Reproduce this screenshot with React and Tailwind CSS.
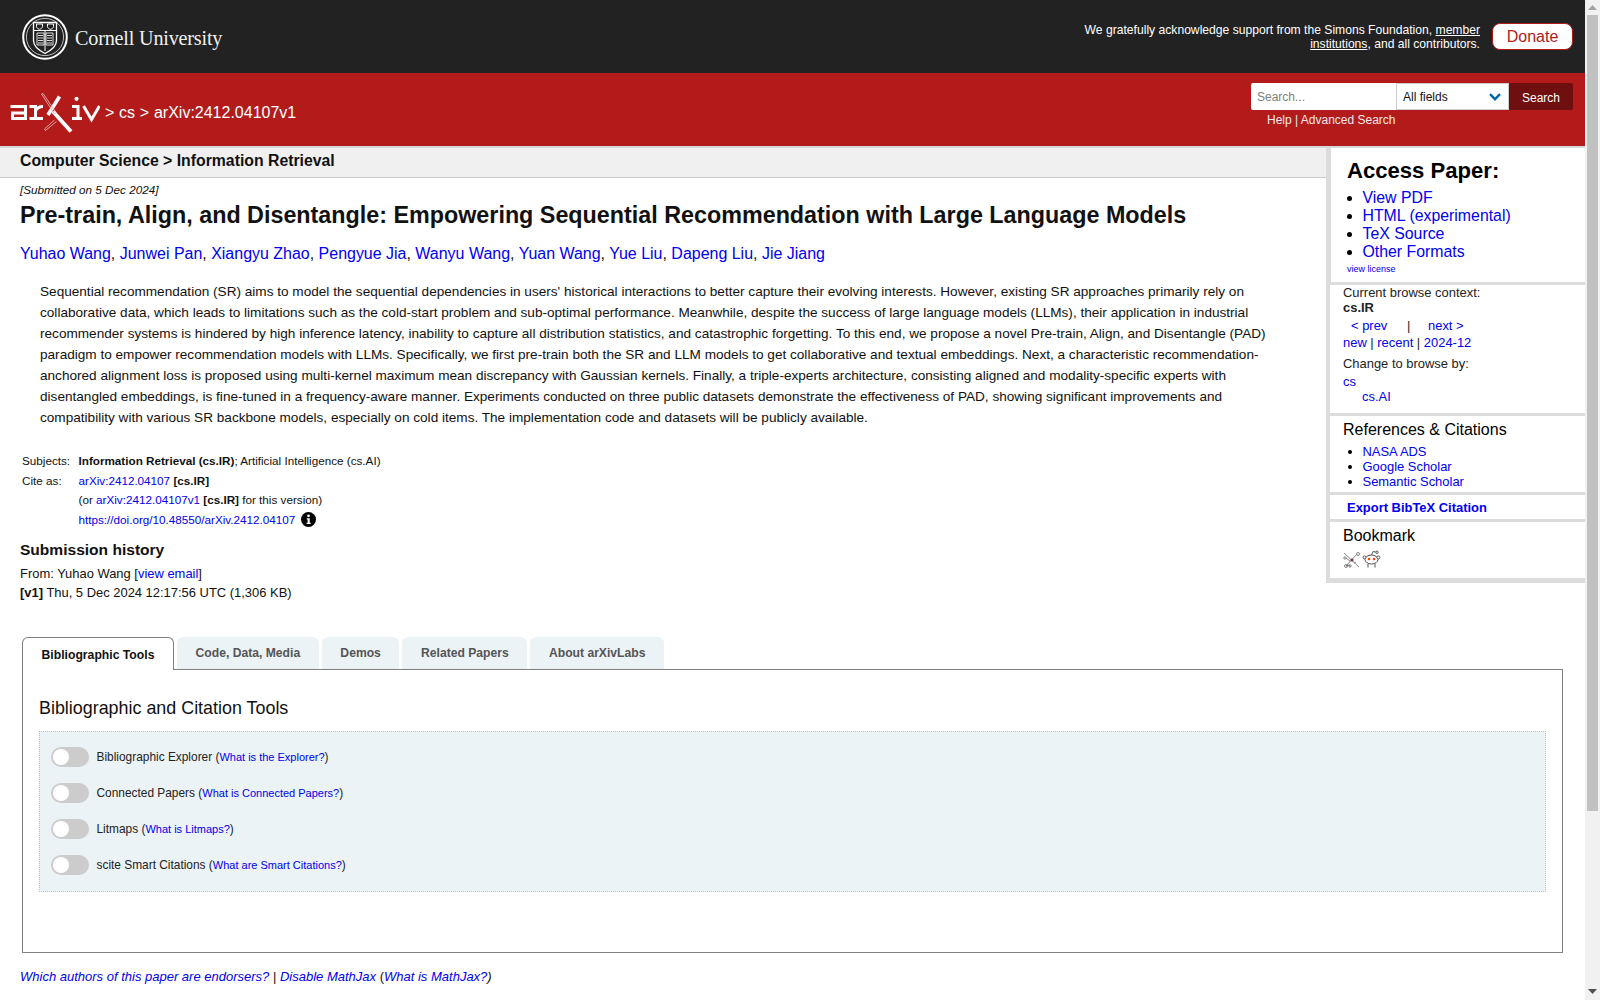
const A = ({ children, className = "" }) => <a className={"text-[#0000ee] " + className}>{children}</a>;

function Seal() {
  return (
    <svg width="46" height="46" viewBox="0 0 46 46" fill="none" stroke="#fff">
      <circle cx="23" cy="23" r="21.8" strokeWidth="2" />
      <circle cx="23" cy="23" r="18.6" strokeWidth="0.7" />
      <path d="M11.5 8.5h23v18c0 6.5-5.5 10-11.5 13-6-3-11.5-6.5-11.5-13z" strokeWidth="1.3" />
      <path d="M11.5 16.5h23" strokeWidth="1" />
      <path d="M14.5 10v2.5c0 1.6 2.2 2.8 3 2.8s3-1.2 3-2.8V10zM25.5 10v2.5c0 1.6 2.2 2.8 3 2.8s3-1.2 3-2.8V10z" strokeWidth="1" />
      <path d="M15 19h7v12h-7zM24 19h7v12h-7zM16 21.5h5M16 24h5M16 26.5h5M16 29h5M25 21.5h5M25 24h5M25 26.5h5M25 29h5" strokeWidth="0.85" />
      <path d="M23 17v20" strokeWidth="1" />
    </svg>
  );
}

function ArxivLogo() {
  return (
    <svg width="90" height="40" viewBox="0 0 90 40" fill="none" className="shrink-0">
      <g stroke="#fff" strokeWidth="3">
        <path d="M0.5 13.5H15.5V27M15.5 20H2.5V25.5H15.5" />
        <path d="M19.5 13.5H25.5V27M19.5 25.5H33M25.5 18c1.5-3 4-4.5 7.5-4.5" />
        <path d="M62 13.5H68V27M62 25.5H72" />
        <path d="M73.5 13 81.5 26.5 89.5 13" />
      </g>
      <circle cx="66.5" cy="5.8" r="2.1" fill="#fff" />
      <path d="M49.5 3.5 38 22" stroke="#fff" strokeWidth="3.6" />
      <path d="M43 18.5 61 38.5" stroke="#fff" strokeWidth="3.8" />
      <path d="M31.5 1 33 0.5 46 19.5 44.5 21zM44.5 27 34.5 36l1 1.5 11-9" stroke="#eab3b3" strokeWidth="0.9" />
    </svg>
  );
}

function Toggle() {
  return (
    <span className="flex h-5 w-[38px] shrink-0 items-center rounded-full bg-[#cccccc] pl-[2px]">
      <span className="h-[16px] w-[16px] rounded-full bg-white" />
    </span>
  );
}

function ToolRow({ name, link }) {
  return (
    <div className="flex h-[36px] items-center gap-[7.5px]">
      <Toggle />
      <span className="pt-[1px] text-[11.9px] text-[#222]">
        {name} (<A className="text-[11px]">{link}</A>)
      </span>
    </div>
  );
}

function Tab({ children, active }) {
  return active ? (
    <div className="z-10 -mb-px flex h-[33px] w-[152px] items-center justify-center rounded-t-[6px] border border-b-0 border-[#808080] bg-white pt-[1px] text-[12.2px] font-bold text-[#111]">
      {children}
    </div>
  ) : (
    <div className="flex h-[32px] items-center rounded-t-[6px] bg-[#ecf3f7] px-[18.6px] text-[12.15px] font-bold text-[#555]">
      {children}
    </div>
  );
}

function Scrollbar() {
  return (
    <div className="flex h-full w-[15px] shrink-0 flex-col bg-[#f1f1f1]">
      <div className="flex h-[15px] items-center justify-center">
        <svg width="9" height="5" viewBox="0 0 9 5"><path d="M4.5 0 9 5H0z" fill="#a3a3a3" /></svg>
      </div>
      <div className="mx-[2px] h-[796px] bg-[#c1c1c1]" />
      <div className="flex-1" />
      <div className="flex h-[17px] items-center justify-center">
        <svg width="9" height="5" viewBox="0 0 9 5"><path d="M0 0H9L4.5 5z" fill="#505050" /></svg>
      </div>
    </div>
  );
}

export default function App() {
  return (
    <div className="flex h-screen overflow-hidden bg-white font-['Liberation_Sans',Arial,sans-serif] text-[#111]">
      <div className="min-w-0 flex-1">
        <header className="flex h-[73px] items-center justify-between bg-[#222222] pl-[22px] pr-3">
          <div className="flex items-center gap-[7px]">
            <Seal />
            <span className="pt-[3px] font-['Liberation_Serif',serif] text-[20.2px] tracking-[-0.2px] text-[#f0f0f0]">Cornell University</span>
          </div>
          <div className="flex items-center gap-3">
            <p className="w-[420px] text-right text-[12.13px] leading-[14px] text-white">
              We gratefully acknowledge support from the Simons Foundation, <span className="underline">member institutions</span>, and all contributors.
            </p>
            <div className="flex h-[27px] w-[81px] items-center justify-center rounded-[8px] border border-[#b31b1b] bg-white text-[16px] text-[#b31b1b]">Donate</div>
          </div>
        </header>

        <div className="flex h-[73px] items-start justify-between bg-[#b31b1b] pl-[10px] pr-3">
          <div className="flex items-center pt-[20px]">
            <ArxivLogo />
            <span className="ml-[5px] mt-[-1px] text-[16px] text-white [word-spacing:0.3px]">&gt; cs &gt; arXiv:2412.04107v1</span>
          </div>
          <div className="pt-[10px]">
            <div className="flex h-[27px] text-[12px]">
              <div className="flex w-[145px] items-center rounded-l-[2px] bg-white pl-[6px] text-[#808080]">Search...</div>
              <div className="flex w-[113px] items-center justify-between border border-[#cccccc] bg-white pl-[6px] pr-[7px] text-[#111]">
                All fields
                <svg width="12" height="8" viewBox="0 0 12 8" fill="none" stroke="#0068ac" strokeWidth="2.4"><path d="M1 1.2l5 5 5-5" /></svg>
              </div>
              <div className="flex w-[64px] items-center justify-center rounded-r-[2px] bg-[#6f0f0f] pt-[2px] text-white">Search</div>
            </div>
            <div className="mt-[3px] pl-[16px] text-[12px] leading-[14px] text-[#f0e8e8]">Help | Advanced Search</div>
          </div>
        </div>

        <div className="flex border-t-2 border-[#d6d6d6]">
          <main className="min-w-0 flex-1">
            <div className="flex h-[30px] items-center border-b border-[#cccccc] bg-[#f0f0f0] pl-[20px] pb-[3px] text-[15.8px] font-bold">
              Computer Science &gt; Information Retrieval
            </div>
            <div className="pl-[20px]">
              <div className="mt-[5px] text-[11.7px] italic leading-[14px]">[Submitted on 5 Dec 2024]</div>
              <h1 className="mt-[4px] text-[23.32px] font-bold leading-[28px]">Pre-train, Align, and Disentangle: Empowering Sequential Recommendation with Large Language Models</h1>
              <div className="mt-[14px] text-[15.98px] leading-[22px] text-[#111]">
                <A>Yuhao Wang</A>, <A>Junwei Pan</A>, <A>Xiangyu Zhao</A>, <A>Pengyue Jia</A>, <A>Wanyu Wang</A>, <A>Yuan Wang</A>, <A>Yue Liu</A>, <A>Dapeng Liu</A>, <A>Jie Jiang</A>
              </div>
              <p className="ml-[20px] mt-[16px] w-[1250px] text-[13.6px] leading-[21px]">
                Sequential recommendation (SR) aims to model the sequential dependencies in users' historical interactions to better capture their evolving interests. However, existing SR approaches primarily rely on collaborative data, which leads to limitations such as the cold-start problem and sub-optimal performance. Meanwhile, despite the success of large language models (LLMs), their application in industrial recommender systems is hindered by high inference latency, inability to capture all distribution statistics, and catastrophic forgetting. To this end, we propose a novel Pre-train, Align, and Disentangle (PAD) paradigm to empower recommendation models with LLMs. Specifically, we first pre-train both the SR and LLM models to get collaborative and textual embeddings. Next, a characteristic recommendation-anchored alignment loss is proposed using multi-kernel maximum mean discrepancy with Gaussian kernels. Finally, a triple-experts architecture, consisting aligned and modality-specific experts with disentangled embeddings, is fine-tuned in a frequency-aware manner. Experiments conducted on three public datasets demonstrate the effectiveness of PAD, showing significant improvements and compatibility with various SR backbone models, especially on cold items. The implementation code and datasets will be publicly available.
              </p>
              <div className="ml-[2px] mt-[23px] grid grid-cols-[56.5px_1fr] text-[11.7px] leading-[19.6px]">
                <div>Subjects:</div>
                <div><b>Information Retrieval (cs.IR)</b>; Artificial Intelligence (cs.AI)</div>
                <div>Cite as:</div>
                <div><A>arXiv:2412.04107</A> <b>[cs.IR]</b></div>
                <div />
                <div>(or <A>arXiv:2412.04107v1</A> <b>[cs.IR]</b> for this version)</div>
                <div />
                <div className="flex items-center">
                  <A>https://doi.org/10.48550/arXiv.2412.04107</A>
                  <svg className="ml-[6px]" width="15" height="15" viewBox="0 0 15 15">
                    <circle cx="7.5" cy="7.5" r="7.5" fill="#000" />
                    <circle cx="7.5" cy="3.8" r="1.4" fill="#fff" />
                    <path d="M5.8 6.2h2.9v4.6h1v1.3H5.6v-1.3h1V7.5h-.8z" fill="#fff" />
                  </svg>
                </div>
              </div>
              <h2 className="mt-[11px] text-[15.55px] font-bold leading-[20px]">Submission history</h2>
              <div className="mt-[5px] text-[12.95px] leading-[18.5px]">
                <div>From: Yuhao Wang [<A>view email</A>]</div>
                <div><b>[v1]</b> Thu, 5 Dec 2024 12:17:56 UTC (1,306 KB)</div>
              </div>
            </div>
          </main>

          <aside className="h-[435px] w-[259px] shrink-0 border-b-[5px] border-l-[4px] border-[#dcdcdc] text-[12.95px] leading-[15px] text-[#222]">
            <section className="h-[137px] border-b-[3px] border-l border-[#dcdcdc] pl-[16px] pt-[10px]">
              <h2 className="text-[22.1px] font-bold leading-[26px] text-black">Access Paper:</h2>
              <ul className="mt-[5px] list-disc pl-[15.5px] text-[15.85px] leading-[18px] text-black marker:text-black">
                <li><A>View PDF</A></li>
                <li><A>HTML (experimental)</A></li>
                <li><A>TeX Source</A></li>
                <li><A>Other Formats</A></li>
              </ul>
              <A className="mt-[2px] block text-[9px] leading-[12px]">view license</A>
            </section>
            <section className="h-[131px] border-b-[3px] border-[#dcdcdc] pl-[13px]">
              <div>Current browse context:</div>
              <div className="font-bold">cs.IR</div>
              <div className="mt-[2px] flex h-[17px] items-center pl-[8px]">
                <A className="w-[56px]">&lt; prev</A><span className="w-[21px]">|</span><A>next &gt;</A>
              </div>
              <div className="leading-[18px]"><A>new</A> | <A>recent</A> | <A>2024-12</A></div>
              <div className="mt-[4px]">Change to browse by:</div>
              <div className="mt-[3px]"><A>cs</A></div>
              <div className="pl-[19px]"><A>cs.AI</A></div>
            </section>
            <section className="h-[79px] border-b-[3px] border-[#dcdcdc] pl-[13px] pt-[5px]">
              <h3 className="text-[16px] leading-[18px] text-black">References &amp; Citations</h3>
              <ul className="mt-[5px] list-disc pl-[19.5px] marker:text-black">
                <li><A>NASA ADS</A></li>
                <li><A>Google Scholar</A></li>
                <li><A>Semantic Scholar</A></li>
              </ul>
            </section>
            <section className="flex h-[27px] items-center border-b-[3px] border-[#dcdcdc] pl-[17px]">
              <A className="font-bold">Export BibTeX Citation</A>
            </section>
            <section className="pl-[13px] pt-[5px]">
              <h3 className="text-[16px] leading-[18px] text-black">Bookmark</h3>
              <div className="mt-[5px] flex items-center gap-[1px]">
                <svg width="18" height="18" viewBox="0 0 18 18" fill="none" stroke="#777" strokeWidth="0.9">
                  <path d="M1 2l15 14M14 3L3 15M3 15l4-1M7 10L3 7M11 12l2-1" />
                  <circle cx="15" cy="3" r="1.5" /><circle cx="3" cy="15" r="1.5" /><circle cx="2" cy="7" r="1.2" /><circle cx="7" cy="15" r="1.2" />
                  <circle cx="9" cy="9" r="1.5" fill="#7a3050" stroke="none" />
                </svg>
                <svg width="19" height="19" viewBox="0 0 19 19" fill="none" stroke="#555" strokeWidth="1">
                  <ellipse cx="9.5" cy="9.5" rx="6.5" ry="4.5" fill="#fff" />
                  <circle cx="2.6" cy="7.4" r="1.5" fill="#fff" /><circle cx="16.4" cy="7.4" r="1.5" fill="#fff" />
                  <path d="M9.5 5L11 1.5l3.2.7M6 14v3.5M13 14v3.5" />
                  <circle cx="15" cy="2.3" r="1.2" fill="#fff" />
                  <circle cx="7" cy="9" r="1.3" fill="#ff4500" stroke="none" /><circle cx="12" cy="9" r="1.3" fill="#ff4500" stroke="none" />
                </svg>
              </div>
            </section>
          </aside>
        </div>

        <div className="mt-[35px] pl-[22px] pr-[22px]">
          <div className="flex gap-[3px]">
            <Tab active>Bibliographic Tools</Tab>
            <Tab>Code, Data, Media</Tab>
            <Tab>Demos</Tab>
            <Tab>Related Papers</Tab>
            <Tab>About arXivLabs</Tab>
          </div>
          <div className="h-[284px] border border-[#808080] px-[16px] pt-[26px]">
            <h2 className="text-[17.9px] leading-[24px] text-[#111]">Bibliographic and Citation Tools</h2>
            <div className="mt-[11px] h-[161px] border border-dotted border-[#a9c5d8] bg-[#ecf3f7] px-[11px] pt-[7px]">
              <ToolRow name="Bibliographic Explorer" link="What is the Explorer?" />
              <ToolRow name="Connected Papers" link="What is Connected Papers?" />
              <ToolRow name="Litmaps" link="What is Litmaps?" />
              <ToolRow name="scite Smart Citations" link="What are Smart Citations?" />
            </div>
          </div>
        </div>

        <div className="mt-[15px] pl-[20px] text-[13px] italic leading-[18px]">
          <A>Which authors of this paper are endorsers?</A> <span className="not-italic">|</span> <A>Disable MathJax</A> <span className="not-italic">(</span><A>What is MathJax?</A><span>)</span>
        </div>
      </div>
      <Scrollbar />
    </div>
  );
}
